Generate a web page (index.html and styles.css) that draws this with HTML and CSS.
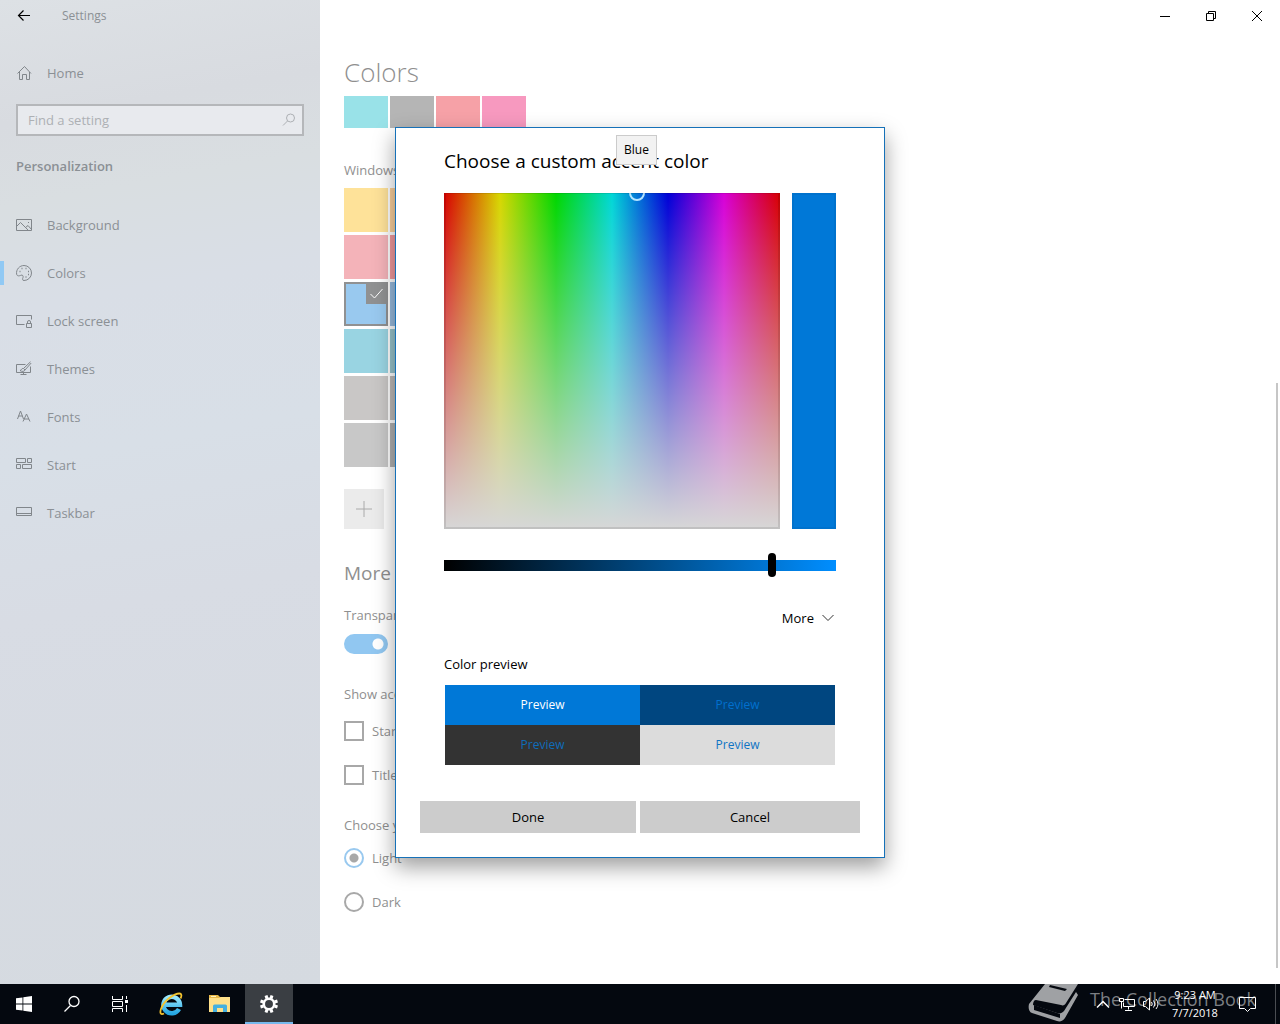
FILE: index.html
```html
<!DOCTYPE html>
<html lang="en">
<head>
    <meta charset="UTF-8">
    <meta name="viewport" content="width=device-width, initial-scale=1.0">
    <title>Settings</title>
    <link rel="stylesheet" href="styles.css">
</head>
<body>
    <div class="window">
        <!-- Sidebar -->
        <aside class="sidebar">
            <div class="sidebar-top">
                <button class="back-btn" aria-label="Back">
                    <svg width="14" height="12" viewBox="0 0 14 12"><path d="M13 5.500H1.500M6.500.5l-5 5 5 5" fill="none" stroke="#000" stroke-width="1.200"/></svg>
                </button>
                <span>Settings</span>
            </div>
            <a class="nav-item" href="#">
                <svg class="icon" viewBox="0 0 16 16"><path d="M1.500 8.500L8.500 1.500l6.500 7M3.500 7v7.500h3v-5h4v5h3V7"/></svg>
                Home
            </a>
            <div class="search-box">
                <input type="text" placeholder="Find a setting" aria-label="Find a setting">
                <svg class="search-icon" viewBox="0 0 14 14"><circle cx="8.500" cy="5" r="4"/><path d="M5.500 8L1 12.500"/></svg>
            </div>
            <h2 class="sidebar-title">Personalization</h2>
            <nav>
                <a class="nav-item" href="#">
                    <svg class="icon" viewBox="0 0 16 16"><path d="M.5 2.500h15v11H.5zM.5 9.500l4-4 7.500 7.500M9.500 10.500l2.500-2 3.500 4M12 5.500h1"/></svg>
                    Background
                </a>
                <a class="nav-item active" href="#">
                    <svg class="icon" viewBox="0 0 16 16"><path d="M8 .5a7.500 7.500 0 0 1 0 15c-2 0-1.500-2-1-3 .6-1.400-.5-3-2-2.300C3.500 11 1 11.500.6 9 0 4.500 3.500.5 8 .5z"/><path d="M3.500 6.500h1M5.500 3.500h1M9.500 3.500h1M12 6.500h1M12 9.500h1M9.500 12h1" stroke-width="1.500"/></svg>
                    Colors
                </a>
                <a class="nav-item" href="#">
                    <svg class="icon" viewBox="0 0 16 16"><path d="M8.500 11.500h-8v-9h15v4M10.500 10.500h5v4h-5zM11.500 10.500V9a1.500 1.500 0 0 1 3 0v1.500"/></svg>
                    Lock screen
                </a>
                <a class="nav-item" href="#">
                    <svg class="icon" viewBox="0 0 16 16"><path d="M9.500 3.500h-9v8h14v-6M7.500 11.500v2M4.500 13.500h6M14.500.8L7.500 7.500l1.500 1.500 6.200-7M7.500 7.500C5 7 6 9.500 4 9.500c2 1.500 4.500 1 5-.5"/></svg>
                    Themes
                </a>
                <a class="nav-item" href="#">
                    <svg class="icon" viewBox="0 0 16 16"><path d="M1.500 10l3-8 3 8M2.500 7h4M7 12.500L10.500 5l3.500 7.500M8 10h5"/></svg>
                    Fonts
                </a>
                <a class="nav-item" href="#">
                    <svg class="icon" viewBox="0 0 16 16"><path d="M.5 1.500h9v4h-9zM11.500 1.500h4v4h-4zM.5 7.500h4v4h-4zM6.500 7.500h9v4h-9z"/></svg>
                    Start
                </a>
                <a class="nav-item" href="#">
                    <svg class="icon" viewBox="0 0 16 16"><path d="M.5 2.500h15v8H.5zM.5 8.500h15"/></svg>
                    Taskbar
                </a>
            </nav>
        </aside>

        <!-- Page -->
        <main class="page">
            <div class="titlebar">
                <button aria-label="Minimize"><svg width="12" height="12" viewBox="0 0 12 12"><path d="M1 6.500h10"/></svg></button>
                <button aria-label="Restore"><svg width="12" height="12" viewBox="0 0 12 12"><path d="M1.500 3.500h7v7h-7zM3.500 3.500v-2h7v7h-2"/></svg></button>
                <button aria-label="Close"><svg width="12" height="12" viewBox="0 0 12 12"><path d="M1 1l10 10M11 1L1 11"/></svg></button>
            </div>
            <h1>Colors</h1>
            <div class="recent">
                <button class="swatch aqua" aria-label="Aqua"></button>
                <button class="swatch gray" aria-label="Gray"></button>
                <button class="swatch coral" aria-label="Coral"></button>
                <button class="swatch pink" aria-label="Pink"></button>
            </div>

            <p class="group-label">Windows colors</p>
            <div class="swatches">
                <button class="swatch yellow" aria-label="Yellow gold"></button>
                <button class="swatch orange" aria-label="Orange"></button>
                <button class="swatch rose" aria-label="Rose"></button>
                <button class="swatch red" aria-label="Red"></button>
                <button class="swatch blue selected" aria-label="Default blue">
                    <svg class="check" viewBox="0 0 22 22"><path d="M4.500 12l4 4L16.500 7"/></svg>
                </button>
                <button class="swatch navy" aria-label="Navy"></button>
                <button class="swatch teal" aria-label="Cool blue"></button>
                <button class="swatch dark-teal" aria-label="Dark teal"></button>
                <button class="swatch warm-gray" aria-label="Warm gray"></button>
                <button class="swatch stone" aria-label="Stone"></button>
                <button class="swatch silver" aria-label="Silver"></button>
                <button class="swatch steel" aria-label="Steel"></button>
            </div>
            <div class="custom-color">
                <button class="add-btn" id="add-color" aria-label="Add"><svg width="16" height="16" viewBox="0 0 16 16"><path d="M0 8h16M8 0v16"/></svg></button>
                <label for="add-color">Custom color</label>
            </div>

            <h2>More options</h2>
            <label class="toggle-label" for="transparency">Transparency effects</label>
            <input class="toggle" type="checkbox" id="transparency" checked>

            <p class="options-label">Show accent color on the following surfaces</p>
            <label class="option"><input type="checkbox">Start, taskbar, and action center</label>
            <label class="option"><input type="checkbox">Title bars</label>

            <p class="options-label mode-label">Choose your default app mode</p>
            <label class="option"><input type="radio" name="mode" checked>Light</label>
            <label class="option"><input type="radio" name="mode">Dark</label>
        </main>
        <div class="scrollbar"><div class="scroll-thumb"></div></div>

        <!-- Custom color dialog -->
        <div class="overlay">
            <div class="dialog" role="dialog" aria-labelledby="dialog-title">
                <h3 id="dialog-title">Choose a custom accent color</h3>
                <div class="tooltip" role="tooltip">Blue</div>
                <div class="picker">
                    <div class="spectrum"><span class="marker"></span></div>
                    <div class="current-color"></div>
                </div>
                <input class="value-slider" type="range" min="0" max="255" value="215" aria-label="Value">
                <button class="more-btn">More
                    <svg width="12" height="8" viewBox="0 0 12 8"><path d="M.5 1L6 6.500 11.500 1"/></svg>
                </button>
                <p class="preview-label">Color preview</p>
                <div class="preview">
                    <span class="accent">Preview</span>
                    <span class="shade">Preview</span>
                    <span class="dark">Preview</span>
                    <span class="light">Preview</span>
                </div>
                <div class="dialog-buttons">
                    <button>Done</button>
                    <button>Cancel</button>
                </div>
            </div>
        </div>
    </div>

    <!-- Taskbar -->
    <footer class="taskbar">
        <button class="task-btn" aria-label="Start">
            <svg width="16" height="16" viewBox="0 0 16 16"><path fill="#fff" d="M0 2.300L6.500 1.400v6.200H0zM7.300 1.300L16 0v7.600H7.300zM0 8.400h6.500v6.200L0 13.700zM7.300 8.400H16V16l-8.700-1.300z"/></svg>
        </button>
        <button class="task-btn" aria-label="Search">
            <svg width="18" height="18" viewBox="0 0 18 18"><g fill="none" stroke="#fff" stroke-width="1.300"><circle cx="11" cy="6.500" r="5"/><path d="M7.500 10.500L1.500 16.500"/></g></svg>
        </button>
        <button class="task-btn" aria-label="Task View">
            <svg width="16" height="16" viewBox="0 0 16 16"><path fill="none" stroke="#fff" d="M.5 0v3.500h10V0M.5 5.500h10v5H.5zM.5 16v-3.500h10V16M14.500 0v3M14.500 9v7"/><path fill="#fff" d="M13 4h3v3h-3z"/></svg>
        </button>
        <div class="pinned">
            <button class="task-btn" aria-label="Internet Explorer">
                <svg width="24" height="24" viewBox="0 0 24 24">
                    <defs><linearGradient id="ie" x1="0" y1="0" x2="0" y2="1"><stop offset="0" stop-color="#9be9ff"/><stop offset="1" stop-color="#26a7e3"/></linearGradient></defs>
                    <path fill="none" stroke="url(#ie)" stroke-width="4.500" d="M6 12.800h15A8.300 8.300 0 1 0 20 17"/>
                    <path fill="none" stroke="#f4c430" stroke-width="1.800" d="M21.500 6.500c1.500-3 1-5-1-5C15 1.500 5 8.500 2 17c-1.500 4.500 0 6 3 4.500"/>
                </svg>
            </button>
            <button class="task-btn" aria-label="File Explorer">
                <svg width="22" height="20" viewBox="0 0 22 20"><path fill="#e9b949" d="M0 1h9l2 2h10v4H0z"/><path fill="#ffe08a" d="M0 4h10l2-1h9v15H0z"/><path fill="#45b0e0" d="M4 18v-6q0-1.500 1.500-1.500h11Q18 10.500 18 12v6h-4v-4H8v4z"/><path fill="#fff3c2" d="M2 2h5v1H2z"/></svg>
            </button>
            <button class="task-btn running" aria-label="Settings">
                <svg width="20" height="20" viewBox="0 0 20 20"><circle cx="10" cy="10" r="5.200" fill="none" stroke="#fff" stroke-width="2.500"/><path stroke="#fff" stroke-width="3" d="M7 1.500l1 3M13 1.500l-1 3M7 18.500l1-3M13 18.500l-1-3M1.500 7l3 1M1.500 13l3-1M18.500 7l-3 1M18.500 13l-3-1"/></svg>
            </button>
        </div>

        <div class="tray">
            <button class="tray-btn" aria-label="Show hidden icons">
                <svg width="14" height="9" viewBox="0 0 14 9"><path d="M1 7.500l6-6 6 6" stroke-width="1.500"/></svg>
            </button>
            <button class="tray-btn" aria-label="Network">
                <svg width="16" height="14" viewBox="0 0 16 14"><path d="M5.500 2.500h10v7h-11v-4M.5 1.500h4v3h-4zM2.500 4.500v7M9.500 9.500v3M6 13.500h7"/></svg>
            </button>
            <button class="tray-btn" aria-label="Volume">
                <svg width="17" height="14" viewBox="0 0 17 14"><path d="M.5 4.500h2l4-3.500v12l-4-3.500h-2zM8.500 5q1.500 2 0 4M10.500 3.500q3 3.500 0 7M13 2q4 5 0 10"/></svg>
            </button>
            <button class="clock"><span>9:23 AM</span><span>7/7/2018</span></button>
            <button class="tray-btn action-center" aria-label="Notifications">
                <svg width="17" height="16" viewBox="0 0 17 16"><path d="M.5 1.500h16v11h-5l-3 3-3-3h-5z"/></svg>
            </button>
            <button class="show-desktop" aria-label="Show desktop"></button>
            <div class="watermark">
                <svg width="52" height="40" viewBox="0 0 52 40"><path fill="#9fa1a4" d="M17 0h33l-12 19c-1 2-3 3-5 2L8 16c-2 0-3 2-3 5l24 8c3 1 5 0 7-2L48 8l2 3-13 23c-2 3-5 4-8 3L4 29c-3-1-4-5-3-9z"/><path fill="#04080f" d="M22 1l17 4-2 2-16-4zM6 21l26 9v4L6 26z"/></svg>
                <span>The Collection Book</span>
            </div>
        </div>
    </footer>
</body>
</html>
```
FILE: styles.css
```css
* {
    margin: 0;
    padding: 0;
    box-sizing: border-box;
}

body {
    display: flex;
    flex-direction: column;
    height: 100vh;
    overflow: hidden;
    font-family: "Open Sans", "Noto Sans", sans-serif;
    font-size: 13px;
    line-height: 20px;
    color: #8f8f8f;
    background-color: white;
}

button,
input {
    font: inherit;
    color: inherit;
    border: none;
    background: none;
}

button {
    display: flex;
    align-items: center;
    justify-content: center;
}

.window {
    position: relative;
    display: flex;
    flex: 1;
    min-height: 0;
    overflow: hidden;
}

/* Sidebar */
.sidebar {
    width: 320px;
    flex-shrink: 0;
    color: #8b9095;
    background: linear-gradient(170deg, #dde1e5 0%, #d8dbe0 12%, #d9dee1 20%, #d9dee6 30%, #d8dfe7 45%, #d8dce4 60%, #d5dae0 100%);
}

.sidebar-top {
    display: flex;
    align-items: center;
    gap: 14px;
    height: 32px;
    font-size: 12px;
}

.back-btn {
    width: 48px;
    height: 32px;
}

.sidebar-top + .nav-item {
    margin-top: 17px;
}

.nav-item {
    display: flex;
    align-items: center;
    gap: 15px;
    height: 48px;
    padding: 0 16px;
    color: inherit;
    text-decoration: none;
}

.nav-item.active {
    background: linear-gradient(#91c9f4, #91c9f4) left center / 4px 24px no-repeat;
}

.icon {
    width: 16px;
    height: 16px;
    fill: none;
    stroke: #81868b;
}

.search-box {
    display: flex;
    align-items: center;
    height: 32px;
    margin: 7px 16px 0;
    padding: 0 6px 0 10px;
    border: 2px solid #b5b7ba;
    background-color: #e8eaee;
}

.search-box input {
    flex: 1;
    min-width: 0;
    outline: none;
}

.search-box input::placeholder {
    color: #adb0b4;
}

.search-icon {
    width: 14px;
    height: 14px;
    fill: none;
    stroke: #adb0b4;
}

.sidebar-title {
    margin: 20px 16px 25px;
    font-size: 13px;
    font-weight: 600;
}

/* Page */
.page {
    flex: 1;
    min-width: 0;
    padding-left: 24px;
}

.titlebar {
    display: flex;
    justify-content: flex-end;
    height: 32px;
    margin-right: -4px;
}

.titlebar button {
    width: 46px;
}

.titlebar svg {
    fill: none;
    stroke: #000;
}

.page h1 {
    margin-top: 16px;
    font-size: 26px;
    font-weight: 300;
    line-height: 48px;
}

.page h2 {
    margin-top: 30px;
    font-size: 19px;
    font-weight: 400;
    line-height: 28px;
}

.recent {
    display: flex;
    gap: 2px;
}

.recent .swatch {
    height: 32px;
}

.group-label {
    margin: 32px 0 8px;
}

.swatches {
    display: grid;
    grid-template-columns: 44px 44px;
    gap: 3px 2px;
}

.swatch {
    position: relative;
    width: 44px;
    height: 44px;
}

.aqua { background-color: #99e2e8; }
.gray { background-color: #b5b5b5; }
.coral { background-color: #f6a1a7; }
.pink { background-color: #f799bf; }
.yellow { background-color: #fee299; }
.orange { background-color: #fbd09c; }
.rose { background-color: #f4b3b9; }
.red { background-color: #f39a9e; }
.blue { background-color: #99c9ef; }
.navy { background-color: #99bbdd; }
.teal { background-color: #99d4e2; }
.dark-teal { background-color: #99c4cc; }
.warm-gray { background-color: #c9c7c6; }
.stone { background-color: #bebbb9; }
.silver { background-color: #c8c8c8; }
.steel { background-color: #b2b2b2; }

.swatch.selected {
    border: 2px solid #909192;
}

.check {
    position: absolute;
    top: -2px;
    right: -2px;
    width: 22px;
    height: 22px;
    fill: none;
    stroke: white;
    background-color: #909192;
}

.custom-color {
    display: flex;
    align-items: center;
    gap: 12px;
    margin-top: 22px;
}

.add-btn {
    width: 40px;
    height: 40px;
    background-color: #ebebeb;
}

.add-btn svg {
    stroke: #aaa;
}

.toggle-label {
    display: block;
    margin: 18px 0 9px;
}

.toggle {
    display: block;
    appearance: none;
    width: 44px;
    height: 20px;
    border-radius: 10px;
    background: radial-gradient(circle at 34px 10px, white 5px, #91c7f1 6px);
}

.options-label {
    margin-top: 30px;
    margin-bottom: 17px;
}

.mode-label {
    margin-bottom: 13px;
}

.option {
    display: flex;
    gap: 8px;
    width: fit-content;
}

.option + .option {
    margin-top: 24px;
}

.option input {
    appearance: none;
    width: 20px;
    height: 20px;
    border: 2px solid #a8a8a8;
}

.option input[type="radio"] {
    border-radius: 50%;
}

.option input[type="radio"]:checked {
    border-color: #99c9ef;
    background: radial-gradient(circle, #a8a8a8 4px, white 5px);
}

.scrollbar {
    display: flex;
    flex-direction: column;
    justify-content: flex-end;
    width: 4px;
    padding-bottom: 16px;
}

.scroll-thumb {
    width: 2px;
    height: calc(60% + 4px);
    background-color: #c6c6c6;
}

/* Custom color dialog */
.overlay {
    position: absolute;
    inset: 0;
    display: flex;
    align-items: center;
    justify-content: center;
    padding-top: 1px;
}

.dialog {
    position: relative;
    width: 490px;
    padding: 19px 24px 24px;
    color: black;
    background-color: white;
    border: 1px solid #1671b8;
    box-shadow: 0 9px 20px rgba(0, 0, 0, 0.38);
}

.dialog > :not(.dialog-buttons) {
    margin-left: 24px;
    margin-right: 24px;
}

.dialog h3 {
    font-size: 19px;
    font-weight: 400;
    line-height: 28px;
}

.dialog .tooltip {
    position: absolute;
    top: 7px;
    left: 220px;
    margin: 0;
    padding: 4px 7px;
    font-size: 12px;
    background-color: #f2f2f2;
    border: 1px solid #cbcbcb;
}

.picker {
    display: flex;
    gap: 12px;
    margin-top: 18px;
}

.spectrum {
    position: relative;
    flex: 1;
    aspect-ratio: 1;
    overflow: hidden;
    background:
        linear-gradient(to bottom, rgba(215, 215, 215, 0), #d7d7d7),
        linear-gradient(to right, #d70000, #d7d700, #00d700, #00d7d7, #0000d7, #d700d7, #d70000);
}

.spectrum::after {
    content: "";
    position: absolute;
    inset: 0;
    border: 2px solid rgba(0, 0, 0, 0.1);
    border-top-width: 1px;
}

/* Sits on the hue and saturation of the chosen color */
.marker {
    position: absolute;
    top: -8px;
    left: 185px;
    width: 16px;
    height: 16px;
    border: 2px solid #b5e5ff;
    border-radius: 50%;
}

.current-color {
    width: 44px;
    background-color: #0078d7;
    border: 2px solid #0072cd;
}

.value-slider {
    display: block;
    appearance: none;
    width: 392px;
    height: 24px;
    margin-top: 24px;
}

.value-slider::-webkit-slider-runnable-track {
    height: 11px;
    background: linear-gradient(to right, black, #008eff);
}

.value-slider::-webkit-slider-thumb {
    appearance: none;
    width: 8px;
    height: 24px;
    margin-top: -7px;
    border-radius: 4px;
    background-color: black;
}

.more-btn {
    gap: 8px;
    height: 32px;
    margin-top: 25px;
    padding-right: 2px;
}

.dialog .more-btn {
    margin-left: auto;
}

.more-btn svg {
    fill: none;
    stroke: #333;
}

.preview-label {
    margin-top: 20px;
    margin-bottom: 11px;
}

.preview {
    display: grid;
    grid-template-columns: 1fr 1fr;
    padding: 0 1px;
    font-size: 12px;
    line-height: 40px;
    text-align: center;
}

.accent {
    color: white;
    background-color: #0078d7;
}

.shade {
    color: #0070ce;
    background-color: #004680;
}

.dark {
    color: #0f6cba;
    background-color: #333;
}

.light {
    color: #0f74c4;
    background-color: #dcdcdc;
}

.dialog-buttons {
    display: grid;
    grid-template-columns: 54fr 55fr;
    gap: 4px;
    margin-top: 36px;
}

.dialog-buttons button {
    height: 32px;
    background-color: #ccc;
}

/* Taskbar */
.taskbar {
    display: flex;
    height: 40px;
    flex-shrink: 0;
    color: white;
    background-color: #04080f;
}

.task-btn {
    width: 48px;
}

.pinned {
    display: flex;
    gap: 1px;
    margin-left: 3px;
}

.running {
    background-color: #3a3e43;
    box-shadow: inset 0 -2px #76b9ed;
}

.tray {
    position: relative;
    display: flex;
    margin-left: auto;
}

.tray-btn {
    position: relative;
    z-index: 1;
    width: 24px;
}

.tray-btn svg {
    fill: none;
    stroke: white;
}

.clock {
    position: relative;
    z-index: 1;
    flex-direction: column;
    width: 64px;
    font-size: 11px;
    line-height: 18px;
}

.action-center {
    width: 40px;
    margin-right: 8px;
}

.show-desktop {
    width: 5px;
    border-left: 1px solid #4a4d52;
}

.watermark {
    position: absolute;
    top: 0;
    right: 24px;
    display: flex;
    gap: 10px;
    font-size: 18px;
    line-height: 30px;
    color: #7c7f83;
    white-space: nowrap;
}
```
